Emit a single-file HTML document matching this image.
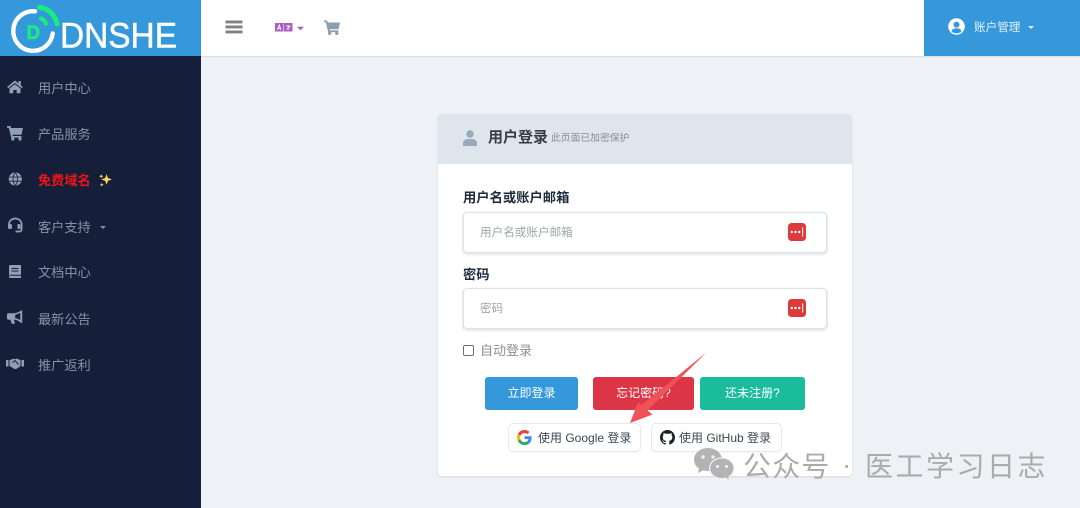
<!DOCTYPE html>
<html lang="zh-CN">
<head>
<meta charset="utf-8">
<title>用户登录</title>
<style>
html,body{margin:0;padding:0;}
body{width:1080px;height:508px;overflow:hidden;position:relative;background:#eef1f5;font-family:"Liberation Sans","Noto Sans CJK SC",sans-serif;}
.a{position:absolute;white-space:nowrap;}
.nav{left:38px;font-size:13.2px;line-height:18px;color:#8492a6;}
.btn{position:absolute;top:377px;height:33px;line-height:33px;border-radius:3px;color:#fff;font-size:12px;text-align:center;}
.oa{position:absolute;top:423px;height:29px;background:#fff;border:1px solid #e6e9ed;border-radius:5px;box-sizing:border-box;box-shadow:0 1px 1px rgba(0,0,0,.03);font-size:12px;line-height:28px;color:#3d4852;}
.inp{position:absolute;left:463px;width:364px;height:41px;box-sizing:border-box;background:#fff;border:1px solid #dce3ea;border-radius:4px;box-shadow:0 1px 1px 1px rgba(200,210,222,.45);font-size:11.6px;line-height:40px;color:#a0a5aa;padding-left:16px;}
.lab{left:463px;font-size:13.3px;font-weight:bold;color:#1f2a3d;line-height:20px;}
.key{position:absolute;left:788px;width:18px;height:18px;}
.wm{font-size:28px;line-height:38px;color:#ababab;font-family:'Noto Sans CJK SC','Liberation Sans',sans-serif;font-weight:400;}
</style>
</head>
<body>
<!-- sidebar -->
<div class="a" style="left:0;top:0;width:201px;height:56px;background:#3498db;"></div>
<div class="a" style="left:0;top:56px;width:201px;height:452px;background:#151f3a;"></div>
<!-- top bar -->
<div class="a" style="left:201px;top:0;width:723px;height:56px;background:#fff;box-shadow:0 1px 1px rgba(0,0,0,.1);"></div>
<div class="a" style="left:924px;top:0;width:156px;height:56px;background:#3498db;box-shadow:0 1px 1px rgba(0,0,0,.1);"></div>

<!-- logo -->
<svg class="a" style="left:0;top:0;" width="201" height="56" viewBox="0 0 201 56">
  <path d="M35 11.300A19.800 19.800 0 1 0 52.700 33.500" fill="none" stroke="#fff" stroke-width="4.400" stroke-linecap="round"/>
  <path d="M39.500 7.500A20 20 0 0 1 57 24" fill="none" stroke="#19ed7f" stroke-width="5" stroke-linecap="round"/>
  <path d="M41 18.500A9 9 0 0 1 46 23.500" fill="none" stroke="#19ed7f" stroke-width="4.400" stroke-linecap="round"/>
  <text x="26.500" y="39" font-family="Liberation Sans" font-weight="bold" font-size="19" fill="#19ed7f" stroke="#19ed7f" stroke-width=".6" textLength="13.500" lengthAdjust="spacingAndGlyphs">D</text>
  <text x="60" y="47.500" font-family="Liberation Sans" font-size="35" fill="#fff" stroke="#fff" stroke-width=".5" textLength="117" lengthAdjust="spacingAndGlyphs">DNSHE</text>
</svg>

<!-- hamburger -->
<svg class="a" style="left:225px;top:20px;" width="18" height="14" viewBox="0 0 18 14" fill="#808080">
  <rect x="0.500" y="0.500" width="17" height="2.900"/><rect x="0.500" y="5.500" width="17" height="2.900"/><rect x="0.500" y="10.500" width="17" height="2.900"/>
</svg>
<!-- language -->
<svg class="a" style="left:275px;top:23px;" width="30" height="10" viewBox="0 0 30 10">
  <rect x="0" y="0" width="8.500" height="8.500" fill="#a85fc4"/><rect x="9" y="0" width="8.500" height="8.500" fill="#a85fc4"/>
  <path d="M2.400 7l1.800-5 1.800 5M3.200 5.400h2" stroke="#fff" stroke-width=".9" fill="none"/>
  <path d="M11 3h4.500M13.200 2v5M11.500 6.500l3.500-3" stroke="#fff" stroke-width=".8" fill="none"/>
  <path d="M22 3.800h7l-3.500 3.400z" fill="#a85fc4"/>
</svg>
<!-- cart -->
<svg class="a" style="left:324px;top:20px;" width="16" height="15" viewBox="0 0 16 15" fill="#8d9db0">
  <path d="M0 .5h3.200l.5 2H16l-1.500 6.800H5.500l.3 1.100h8.700v1.700H4.200L1.800 2.200H0z"/><circle cx="5.700" cy="13.300" r="1.700"/><circle cx="12.800" cy="13.300" r="1.700"/>
</svg>

<!-- account -->
<svg class="a" style="left:948px;top:18px;" width="17" height="17" viewBox="0 0 17 17">
  <circle cx="8.500" cy="8.500" r="8.300" fill="#fff"/><circle cx="8.500" cy="6.600" r="3" fill="#3498db"/><path d="M3.400 13.200c1-2.300 2.800-3 5.100-3s4.100.7 5.100 3a7 7 0 0 1-10.200 0z" fill="#3498db"/>
</svg>
<div class="a" style="left:974px;top:19px;font-size:11.600px;line-height:17px;color:#e3f0fa;">账户管理</div>
<div class="a" style="left:1028px;top:26px;width:0;height:0;border-left:3.500px solid transparent;border-right:3.500px solid transparent;border-top:3.500px solid #e3f0fa;"></div>

<!-- nav icons -->
<svg class="a" style="left:0;top:70px;" width="30" height="310" viewBox="0 70 30 310" fill="#8fa0b5">
  <!-- home -->
  <path d="M15 80.500l3.500 2.900V81h2.300v4.300l2 1.700-1 1.200L15 83 8.200 88.200l-1-1.200z"/>
  <path d="M9.500 88.400L15 84.200l5.500 4.200V93.200h-3.800v-3.200h-3.400v3.200H9.500z"/>
  <!-- cart -->
  <path d="M7 126h3.500l.5 2h12l-1.500 6.800H12.500l.3 1.200h8.700v1.700H11.200L8.800 127.800H7z"/>
  <circle cx="12.800" cy="139" r="1.600"/><circle cx="20" cy="139" r="1.600"/>
  <!-- globe -->
  <circle cx="15.300" cy="179" r="6.600"/>
  <path d="M8.700 177h13.200M8.700 181.200h13.200M15.300 172.400c-3 4-3 9.500 0 13.200M15.300 172.400c3 4 3 9.500 0 13.200" stroke="#151f3a" stroke-width=".8" fill="none"/>
  <!-- headset -->
  <path d="M9 226v-2a6.300 5.500 0 0 1 12.600 0v5.500a2 2 0 0 1-2 2H15.500" fill="none" stroke="#8fa0b5" stroke-width="1.700"/>
  <rect x="8" y="224" width="4" height="5" rx="1.500"/><rect x="17.500" y="224" width="3" height="5" rx="1"/>
  <!-- book -->
  <path d="M10.500 265H21v13H10.500A1.500 1.500 0 0 1 9 276.500v-10A1.500 1.500 0 0 1 10.500 265z"/>
  <path d="M11.500 268.500h7M11.500 271h7M9.500 275.300H21" stroke="#151f3a" stroke-width="1" fill="none"/>
  <!-- megaphone -->
  <path d="M21 310.500h1.200V323H21c-2.500-2.300-5-3.200-7-3.200l1 3.900h-3.300l-1.200-3.900H8.500A1.500 1.500 0 0 1 7 318.300v-3.600A1.500 1.500 0 0 1 8.500 313.200H14c2 0 4.500-.8 7-2.700z"/>
  <path d="M20.200 312.800c-1.700 1.100-3.300 1.700-5 2v3.300c1.700.3 3.300.9 5 2z" fill="#151f3a"/>
  <!-- handshake -->
  <path d="M6 360h2.500v6.500H6zM21.500 360H24v6.500h-2.500zM9.500 360.200l3.500-1.500 2 .5 2-.7 3.500 1.600v6l-4.500 3-1.800-.2-4.700-3z"/>
  <path d="M12.500 362.500l2.500-1.800 3.500 3.800" stroke="#151f3a" stroke-width="1" fill="none"/>
</svg>

<!-- nav labels -->
<div class="a nav" style="top:80px;">用户中心</div>
<div class="a nav" style="top:126px;">产品服务</div>
<div class="a nav" style="top:172px;color:#f01414;font-weight:bold;">免费域名</div>
<svg class="a" style="left:98px;top:173px;" width="15" height="15" viewBox="0 0 14 14" fill="#fbd45c">
  <path d="M8 1l1.300 3.700L13 6l-3.700 1.300L8 11 6.700 7.300 3 6l3.700-1.300z"/><path d="M3 1l.6 1.400L5 3l-1.400.6L3 5l-.6-1.400L1 3l1.400-.6zM3.500 9l.5 1.500 1.500.5-1.500.5L3.500 13 3 11.500 1.500 11 3 10.500z"/>
</svg>
<div class="a nav" style="top:219px;">客户支持</div>
<div class="a" style="left:100px;top:226px;width:0;height:0;border-left:3px solid transparent;border-right:3px solid transparent;border-top:3.500px solid #8492a6;"></div>
<div class="a nav" style="top:264px;">文档中心</div>
<div class="a nav" style="top:311px;">最新公告</div>
<div class="a nav" style="top:357px;">推广返利</div>

<!-- card -->
<div class="a" style="left:438px;top:114px;width:414px;height:362px;background:#fff;border-radius:4px;box-shadow:0 1px 2px rgba(0,0,0,.1);"></div>
<div class="a" style="left:438px;top:114px;width:414px;height:50px;background:#dfe5ec;border-radius:4px 4px 0 0;"></div>
<svg class="a" style="left:463px;top:130px;" width="14" height="16" viewBox="0 0 14 16" fill="#98a9bc">
  <circle cx="7" cy="4" r="3.700"/><path d="M0 16v-2.500C0 10.500 2.500 9 4.500 9h5c2 0 4.500 1.500 4.500 4.500V16z"/>
</svg>
<div class="a" style="left:488px;top:128px;font-size:15px;font-weight:bold;line-height:20px;color:#343d47;">用户登录</div>
<div class="a" style="left:551px;top:131px;font-size:9.800px;line-height:16px;color:#868e96;">此页面已加密保护</div>

<div class="a lab" style="top:188px;">用户名或账户邮箱</div>
<div class="inp" style="top:212px;">用户名或账户邮箱</div>
<svg class="key" style="top:223px;" viewBox="0 0 18 18"><rect width="18" height="18" rx="3.500" fill="#db3b3b"/><circle cx="3.800" cy="9" r="1.200" fill="#fff"/><circle cx="7.500" cy="9" r="1.200" fill="#fff"/><circle cx="11.200" cy="9" r="1.200" fill="#fff"/><rect x="14.200" y="4.500" width="1" height="9" fill="#fff"/></svg>

<div class="a lab" style="top:265px;">密码</div>
<div class="inp" style="top:288px;">密码</div>
<svg class="key" style="top:299px;" viewBox="0 0 18 18"><rect width="18" height="18" rx="3.500" fill="#db3b3b"/><circle cx="3.800" cy="9" r="1.200" fill="#fff"/><circle cx="7.500" cy="9" r="1.200" fill="#fff"/><circle cx="11.200" cy="9" r="1.200" fill="#fff"/><rect x="14.200" y="4.500" width="1" height="9" fill="#fff"/></svg>

<div class="a" style="left:463px;top:345px;width:11px;height:11px;box-sizing:border-box;border:1px solid #6f6f6f;border-radius:2px;background:#fff;"></div>
<div class="a" style="left:480px;top:342px;font-size:13px;line-height:18px;color:#8a8f94;">自动登录</div>

<div class="btn" style="left:485px;width:93px;background:#3498db;">立即登录</div>
<div class="btn" style="left:593px;width:101px;background:#dc3545;">忘记密码?</div>
<div class="btn" style="left:700px;width:105px;background:#1abc9c;">还未注册?</div>

<div class="oa" style="left:508px;width:133px;padding-left:29px;">使用 Google 登录</div>
<svg class="a" style="left:517px;top:430px;" width="15" height="15" viewBox="0 0 48 48">
  <path fill="#EA4335" d="M24 9.500c3.500 0 6.700 1.300 9.100 3.500l6.800-6.800C35.800 2.400 30.300 0 24 0 14.600 0 6.500 5.400 2.600 13.200l7.900 6.200C12.400 13.700 17.700 9.500 24 9.500z"/>
  <path fill="#4285F4" d="M46.900 24.500c0-1.600-.1-3.100-.4-4.500H24v9h12.900c-.6 3-2.200 5.500-4.700 7.200l7.700 6c4.500-4.200 7-10.300 7-17.700z"/>
  <path fill="#FBBC05" d="M10.500 28.600c-.5-1.400-.8-3-.8-4.600s.3-3.200.8-4.600l-7.900-6.200C.9 16.500 0 20.100 0 24s.9 7.500 2.600 10.800z"/>
  <path fill="#34A853" d="M24 48c6.500 0 11.900-2.100 15.900-5.800l-7.700-6c-2.200 1.400-4.900 2.300-8.200 2.300-6.300 0-11.600-4.200-13.500-9.900l-7.900 6.200C6.500 42.600 14.600 48 24 48z"/>
</svg>
<div class="oa" style="left:651px;width:131px;padding-left:27px;">使用 GitHub 登录</div>
<svg class="a" style="left:660px;top:430px;" width="15" height="15" viewBox="0 0 16 16" fill="#1b1f23">
  <path d="M8 0C3.580 0 0 3.580 0 8c0 3.540 2.290 6.530 5.470 7.590.4.070.55-.17.55-.38 0-.19-.01-.82-.01-1.490-2.010.37-2.530-.49-2.690-.94-.09-.23-.48-.94-.82-1.130-.28-.15-.68-.52-.01-.53.63-.01 1.080.58 1.230.82.720 1.210 1.870.87 2.330.66.070-.52.280-.87.510-1.070-1.780-.2-3.640-.89-3.640-3.950 0-.87.310-1.590.82-2.150-.08-.2-.36-1.020.08-2.120 0 0 .67-.21 2.200.82.640-.18 1.320-.27 2-.27s1.360.09 2 .27c1.530-1.040 2.200-.82 2.200-.82.440 1.100.16 1.920.08 2.120.51.56.82 1.270.82 2.150 0 3.070-1.870 3.750-3.650 3.950.29.25.54.73.54 1.480 0 1.070-.01 1.930-.01 2.200 0 .21.150.46.550.38A8.010 8.010 0 0 0 16 8c0-4.420-3.580-8-8-8z"/>
</svg>

<!-- arrow -->
<svg class="a" style="left:0;top:0;" width="1080" height="508" viewBox="0 0 1080 508">
  <path d="M706.500 352.500L647.500 410.500l5 4L630 423l8-20.500 3.500 2.500z" fill="#f0525a"/>
</svg>

<!-- watermark -->
<svg class="a" style="left:694px;top:448px;" width="41" height="34" viewBox="0 0 41 34">
  <path d="M14 0C6.300 0 0 5.300 0 11.700c0 3.600 2 6.800 5 8.900L4 25l5.200-2.600c1.500.4 3.100.7 4.800.7 7.700 0 14-5.200 14-11.400S21.700 0 14 0z" fill="#b3b3b3"/>
  <circle cx="9" cy="9" r="1.700" fill="#eef1f5"/><circle cx="19" cy="9" r="1.700" fill="#eef1f5"/>
  <path d="M28 10c-6.800 0-12.500 4.600-12.500 10.300S21.200 30.600 28 30.600c1.400 0 2.700-.2 4-.6l3 3.500.2-5c3-1.900 4.800-4.800 4.800-8.200C40 14.600 34.800 10 28 10z" fill="#b3b3b3" stroke="#eef1f5" stroke-width="1.200"/>
  <circle cx="23.500" cy="18.500" r="1.500" fill="#eef1f5"/><circle cx="32.500" cy="18.500" r="1.500" fill="#eef1f5"/>
</svg>
<div class="a wm" style="left:743px;top:446px;letter-spacing:1.200px;">公众号</div>
<div class="a wm" style="left:842px;top:446px;font-family:'Liberation Sans',sans-serif;">·</div>
<div class="a wm" style="left:865px;top:446px;letter-spacing:2.500px;">医工学习日志</div>
</body>
</html>
